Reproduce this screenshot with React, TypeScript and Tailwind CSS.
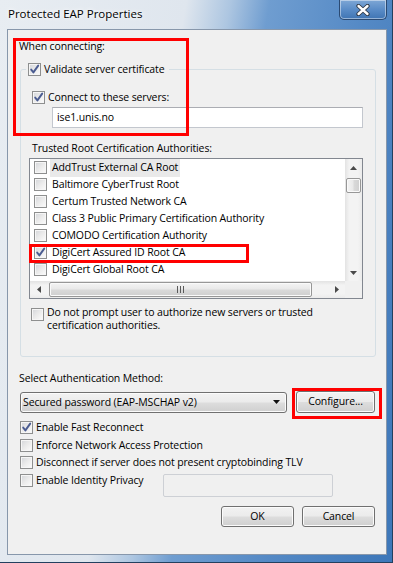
import React from "react";

function CheckBox({ checked = false }: { checked?: boolean }) {
  return (
    <span className="relative inline-block h-[13px] w-[13px] shrink-0 border border-[#8e8f8f] bg-[linear-gradient(135deg,#d3d5d9_0%,#ebebeb_50%,#fcfcfc_100%)] shadow-[inset_0_0_0_1px_#f6f6f6]">
      {checked && (
        <svg className="absolute left-0 top-0" width="11" height="11" viewBox="0 0 11 11">
          <path
            d="M2.2 5.6 L4.4 8.4 L9.2 1.6"
            fill="none"
            stroke="#4b5c91"
            strokeWidth="1.9"
            strokeLinecap="round"
            strokeLinejoin="round"
          />
        </svg>
      )}
    </span>
  );
}

function Btn({ children, w }: { children: React.ReactNode; w: string }) {
  return (
    <div
      className={
        "flex h-full items-center justify-center rounded-[3px] border border-[#707070] bg-[linear-gradient(#f2f2f2_0%,#ebebeb_48%,#dddddd_52%,#cfcfcf_100%)] shadow-[inset_0_0_0_1px_#fbfbfb] " +
        w
      }
    >
      {children}
    </div>
  );
}

function Tri({ dir }: { dir: "up" | "down" | "left" | "right" }) {
  const d =
    dir === "up"
      ? "M0 4 L3.5 0 L7 4 Z"
      : dir === "down"
      ? "M0 0 L7 0 L3.5 4 Z"
      : dir === "left"
      ? "M4 0 L4 7 L0 3.5 Z"
      : "M0 0 L4 3.5 L0 7 Z";
  const w = dir === "up" || dir === "down" ? 7 : 4;
  const h = dir === "up" || dir === "down" ? 4 : 7;
  return (
    <svg width={w} height={h} viewBox={`0 0 ${w} ${h}`}>
      <path d={d} fill="#4a4a4a" />
    </svg>
  );
}

const rows = [
  { t: "AddTrust External CA Root", c: false, hl: true },
  { t: "Baltimore CyberTrust Root", c: false },
  { t: "Certum Trusted Network CA", c: false },
  { t: "Class 3 Public Primary Certification Authority", c: false },
  { t: "COMODO Certification Authority", c: false },
  { t: "DigiCert Assured ID Root CA", c: true },
  { t: "DigiCert Global Root CA", c: false },
];

export default function App() {
  return (
    <div className="relative h-[563px] w-[393px] overflow-hidden border-b border-r border-[#23405f] bg-[linear-gradient(100deg,#e8edf2_0%,#dfe6ee_38%,#adc6e1_47%,#6f9dd0_55%,#5489c5_75%,#3d77b9_100%)] font-['Open_Sans',sans-serif] text-[10.5px] tracking-[-0.12px] text-black">
      {/* title bar */}
      <div className="flex h-[29px]">
        <div className="ml-[8px] mt-[6px] h-[16px] text-[11.5px] leading-[16px] tracking-normal [text-shadow:0_0_7px_#ffffff,0_0_3px_#ffffff]">
          Protected EAP Properties
        </div>
        <div className="ml-auto mr-[5px] flex h-[20px] w-[48px] items-center justify-center rounded-b-[5px] border border-t-0 border-[#2b4a72] bg-[linear-gradient(#7ea7d5,#5a8cc7_50%,#3f74b3)] shadow-[inset_0_0_0_1px_rgba(255,255,255,0.45)]">
          <svg width="14" height="12" viewBox="0 0 14 12">
            <path d="M2.5 2 L11.5 10 M11.5 2 L2.5 10" stroke="#2d3440" strokeWidth="4.2" strokeLinecap="round" />
            <path d="M2.5 2 L11.5 10 M11.5 2 L2.5 10" stroke="#ffffff" strokeWidth="2.4" strokeLinecap="round" />
          </svg>
        </div>
      </div>

      {/* client panel */}
      <div className="ml-[7px] h-[526px] w-[380px] border border-[#8797ab] bg-[#f0f0f0]">
        <div className="ml-[11px] mt-[9px] leading-[15px]">When connecting:</div>

        <fieldset className="ml-[12px] mt-[7px] w-[356px] rounded-[3px] border border-[#d5dfe5] pb-[24px]">
          <legend className="ml-[5px]">
            <span className="flex h-[17px] items-center gap-[3px] pl-[2px] pr-[5px]">
              <CheckBox checked />
              <span className="leading-[15px]">Validate server certificate</span>
            </span>
          </legend>

          <div className="ml-[11px] mt-[11px] flex h-[16px] items-center gap-[3px]">
            <CheckBox checked />
            <span className="leading-[15px]">Connect to these servers:</span>
          </div>
          <div className="ml-[31px] mt-[2px] flex h-[21px] w-[311px] items-center border border-[#c3c7ce] border-t-[#abadb3] bg-white pl-[4px] leading-[15px]">
            ise1.unis.no
          </div>

          <div className="ml-[11px] mt-[13px] leading-[15px]">Trusted Root Certification Authorities:</div>

          {/* list box */}
          <div className="ml-[8px] mt-[2px] flex h-[141px] w-[334px] flex-col border border-[#828790] bg-white">
            <div className="flex h-[122px]">
              <div className="flex-1 overflow-hidden pl-[4px]">
                {rows.map((r) => (
                  <div key={r.t} className="flex h-[17px] items-center">
                    <CheckBox checked={r.c} />
                    <span
                      className={
                        "ml-[3px] flex h-[18px] items-center whitespace-nowrap px-[2px] leading-[15px] " +
                        (r.hl ? "bg-[#e9e9e9]" : "")
                      }
                    >
                      {r.t}
                    </span>
                  </div>
                ))}
              </div>
              {/* vertical scrollbar */}
              <div className="flex w-[17px] flex-col bg-[linear-gradient(90deg,#e3e3e3,#f3f3f3_25%,#f3f3f3_75%,#ebebeb)]">
                <div className="flex h-[17px] items-center justify-center">
                  <Tri dir="up" />
                </div>
                <div className="flex-1">
                  <div className="mx-[1px] mt-[2px] h-[15px] rounded-[2px] border border-[#979797] bg-[linear-gradient(90deg,#f4f4f4,#e9e9e9_45%,#d9d9d9_55%,#cfcfcf)] shadow-[inset_0_0_0_1px_#fafafa]" />
                </div>
                <div className="flex h-[17px] items-center justify-center">
                  <Tri dir="down" />
                </div>
              </div>
            </div>
            {/* horizontal scrollbar */}
            <div className="flex h-[17px]">
              <div className="flex flex-1 items-center bg-[linear-gradient(#e3e3e3,#f3f3f3_25%,#f3f3f3_75%,#ebebeb)]">
                <div className="flex h-full w-[17px] items-center justify-center">
                  <Tri dir="left" />
                </div>
                <div className="ml-[2px] flex h-[15px] w-[263px] items-center justify-center rounded-[2px] border border-[#979797] bg-[linear-gradient(#f4f4f4,#e9e9e9_45%,#d9d9d9_55%,#cfcfcf)] shadow-[inset_0_0_0_1px_#fafafa]">
                  <svg width="7" height="7" viewBox="0 0 7 7">
                    <path d="M0.5 0 V7 M3.5 0 V7 M6.5 0 V7" stroke="#5a5a5a" strokeWidth="1" />
                  </svg>
                </div>
                <div className="ml-auto flex h-full w-[17px] items-center justify-center">
                  <Tri dir="right" />
                </div>
              </div>
              <div className="w-[17px] bg-[#f0f0f0]" />
            </div>
          </div>

          <div className="ml-[10px] mt-[7px] flex items-start gap-[3px]">
            <span className="mt-[2px] flex">
              <CheckBox />
            </span>
            <div className="leading-[13px]">
              Do not prompt user to authorize new servers or trusted
              <br />
              certification authorities.
            </div>
          </div>
        </fieldset>

        <div className="ml-[11px] mt-[14px] leading-[15px]">Select Authentication Method:</div>

        <div className="mt-[5px] flex h-[22px] items-center">
          <div className="ml-[12px] flex h-[21px] w-[267px] items-center rounded-[3px] border border-[#707070] bg-[linear-gradient(#f2f2f2_0%,#ebebeb_48%,#dddddd_52%,#cfcfcf_100%)] pl-[2px] pr-[6px] shadow-[inset_0_0_0_1px_#fbfbfb]">
            <span className="leading-[15px]">Secured password (EAP-MSCHAP v2)</span>
            <span className="ml-auto flex">
              <svg width="7" height="4" viewBox="0 0 7 4">
                <path d="M0 0 L7 0 L3.5 4 Z" fill="#111111" />
              </svg>
            </span>
          </div>
          <div className="ml-[9px] h-[22px]">
            <Btn w="w-[79px]">Configure...</Btn>
          </div>
        </div>

        <div className="ml-[12px] mt-[6px] flex flex-col">
          <div className="flex h-[17.5px] items-center gap-[3px]">
            <CheckBox checked />
            <span className="leading-[15px]">Enable Fast Reconnect</span>
          </div>
          <div className="flex h-[17.5px] items-center gap-[3px]">
            <CheckBox />
            <span className="leading-[15px]">Enforce Network Access Protection</span>
          </div>
          <div className="flex h-[17.5px] items-center gap-[3px]">
            <CheckBox />
            <span className="leading-[15px]">Disconnect if server does not present cryptobinding TLV</span>
          </div>
          <div className="flex items-start">
            <div className="flex h-[17.5px] w-[143px] items-center gap-[3px]">
              <CheckBox />
              <span className="leading-[15px]">Enable Identity Privacy</span>
            </div>
            <div className="mt-[2.5px] h-[23px] w-[170px] rounded-[2px] border border-[#cdd0d5] bg-[#f0f0f0]" />
          </div>
        </div>

        <div className="mt-[9px] flex h-[21px] justify-end gap-[8px] pr-[11px]">
          <Btn w="w-[73px]">OK</Btn>
          <Btn w="w-[73px]">Cancel</Btn>
        </div>
      </div>

      {/* red annotation boxes */}
      <div className="pointer-events-none absolute left-[13px] top-[38px] h-[98px] w-[176px] border-[3px] border-[#ff0000]" />
      <div className="pointer-events-none absolute left-[29px] top-[244px] h-[19px] w-[220px] border-[3px] border-[#ff0000]" />
      <div className="pointer-events-none absolute left-[292px] top-[388px] h-[31px] w-[90px] border-[3px] border-[#ff0000]" />
    </div>
  );
}
